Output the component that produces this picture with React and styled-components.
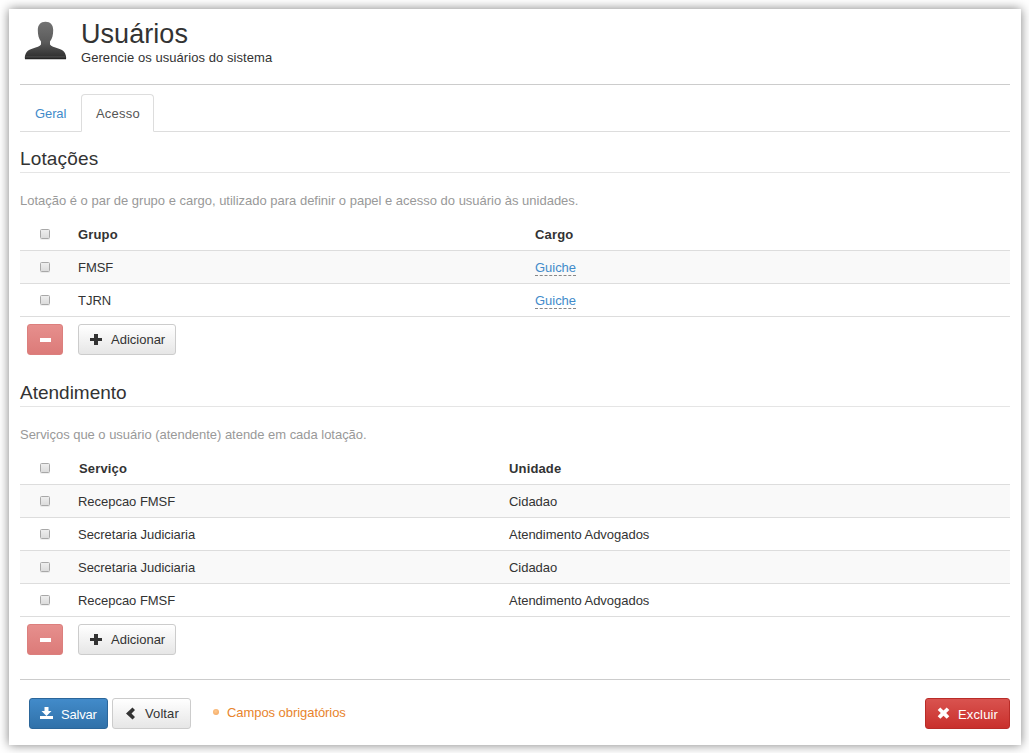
import React from 'react';
import styled, { createGlobalStyle, css } from 'styled-components';

const GlobalStyle = createGlobalStyle`
  * { box-sizing: border-box; }
  body {
    margin: 0;
    background: #fff;
    color: #333;
    font: 13px/18px "Liberation Sans", Arial, sans-serif;
  }
`;

const Page = styled.div`
  width: 1029px;
  height: 753px;
  padding: 9px 8px 8px 9px;
  overflow: hidden;
`;

const Panel = styled.main`
  width: 1012px;
  height: 736px;
  padding: 0 11px;
  background: #fff;
  box-shadow: 0 0 10px rgba(0, 0, 0, 0.5);
  display: flex;
  flex-direction: column;
`;

const Header = styled.header`
  display: flex;
  height: 76px;
  border-bottom: 1px solid #ccc;
`;

const Avatar = styled.svg`
  width: 44px;
  height: 40px;
  margin: 12px 0 0 4px;
`;

const Heading = styled.div`
  margin: 10px 0 0 13px;
`;

const Title = styled.h1`
  margin: 0;
  font-size: 27px;
  font-weight: 400;
  line-height: 30px;
  letter-spacing: 0.05px;
`;

const Subtitle = styled.p`
  margin: 0;
  letter-spacing: 0.06px;
`;

const Tabs = styled.nav`
  display: flex;
  height: 47px;
  margin-bottom: 16px;
  padding-top: 9px;
  border-bottom: 1px solid #ddd;
`;

const Tab = styled.a`
  height: 38px;
  padding: 10px 14px;
  width: ${(p) => p.$width}px;
  color: #428bca;
  letter-spacing: -0.1px;
  border: 1px solid transparent;
  ${(p) => p.$active && css`
    color: #555;
    letter-spacing: 0.2px;
    background: #fff;
    border-color: #ddd #ddd #fff;
    border-radius: 4px 4px 0 0;
  `}
`;

const SectionTitle = styled.h2`
  margin: 0;
  height: 25px;
  font-size: 19px;
  font-weight: 400;
  line-height: 22px;
  letter-spacing: ${(p) => p.$spacing || 0}px;
  border-bottom: 1px solid #e5e5e5;
`;

const Hint = styled.p`
  margin: 19px 0 8px;
  color: #999;
  letter-spacing: ${(p) => p.$spacing || 0}px;
`;

const Table = styled.div`
  display: flex;
  flex-direction: column;
`;

const Row = styled.div`
  display: grid;
  grid-template-columns: 58px ${(p) => p.$split}px 1fr;
  height: 33px;
  padding-top: 8px;
  letter-spacing: -0.03px;
  border-bottom: 1px solid #ddd;
  background: ${(p) => (p.$striped ? '#f9f9f9' : '#fff')};
  ${(p) => p.$head && css`
    font-weight: 700;
    letter-spacing: 0.15px;
  `}
`;

const HeadCell = styled.span`
  padding-left: ${(p) => p.$inset || 0}px;
`;

const CheckCell = styled.span`
  display: flex;
  padding: 3px 0 0 20px;
`;

const Check = styled.input`
  appearance: none;
  width: 10px;
  height: 10px;
  margin: 0;
  border: 1px solid #a8a8a8;
  border-radius: 1.5px;
  background: linear-gradient(#eee, #dcdcdc);
  box-shadow: 0 1px 0 rgba(0, 0, 0, 0.06);
`;

const Editable = styled.a`
  display: inline-block;
  height: 17px;
  color: #428bca;
  border-bottom: 1px dashed #888;
`;

const Actions = styled.div`
  display: flex;
  gap: 15px;
  height: ${(p) => p.$height}px;
  padding: 7px 0 0 7px;
`;

const tones = {
  plain: css`
    color: #333;
    border-color: #ccc;
    background: linear-gradient(#fff, #e6e6e6);
  `,
  primary: css`
    color: #fff;
    border-color: #2b669a;
    background: linear-gradient(#428bca, #3071a9);
  `,
  danger: css`
    color: #fff;
    border-color: #b92c28;
    background: linear-gradient(#d9534f, #c9302c);
  `,
  muted: css`
    color: #fff;
    border-color: #dc7f7d;
    background: linear-gradient(#e68f8d, #dc7b79);
  `,
};

const Button = styled.button`
  display: flex;
  align-items: center;
  width: ${(p) => p.$width}px;
  height: 31px;
  padding: 0 0 0 ${(p) => p.$inset ?? 11}px;
  font: inherit;
  border: 1px solid;
  border-radius: 3px;
  ${(p) => tones[p.$tone]}
`;

const Glyph = styled.svg`
  flex: none;
  width: 13px;
  height: 13px;
  margin-right: ${(p) => p.$gap ?? 8}px;
  fill: currentColor;
`;

const Label = styled.span`
  padding-top: ${(p) => p.$drop || 0}px;
  letter-spacing: ${(p) => p.$spacing || 0}px;
`;

const Footer = styled.footer`
  display: flex;
  gap: 4px;
  padding: 18px 0 0 9px;
  border-top: 1px solid #ccc;
`;

const Required = styled.span`
  display: flex;
  flex: 1;
  gap: 8px;
  padding: 6px 0 0 18px;
  color: #e8842c;
  letter-spacing: -0.06px;
`;

const Dot = styled.i`
  width: 6px;
  height: 6px;
  margin: 5px 0 0;
  border-radius: 50%;
  background: radial-gradient(circle at 45% 40%, #ffc98f, #f0a25a);
`;

const icons = {
  plus: 'M4 1h4v4h4v3H8v4H4V8H0V5h4z',
  minus: 'M1 5h11v4H1z',
  save: 'M4.500 0h4v4h3L6.500 9l-5-5h3zM0 9h13v3H0z',
  left: 'M7.500.5L10 3 6.500 6.500 10 10 7.500 12.500 1 6.500z',
  remove: 'M3.300.5L6.500 3.600 9.700.5 12.300 3 9.200 6 12.300 9.200 9.700 11.800 6.500 8.700 3.300 11.800.7 9.200 3.800 6 .7 3z',
};

const Icon = ({ name, gap }) => (
  <Glyph viewBox="0 0 13 13" $gap={gap}>
    <path d={icons[name]} />
  </Glyph>
);

const assignments = [
  ['FMSF', 'Guiche'],
  ['TJRN', 'Guiche'],
];

const services = [
  ['Recepcao FMSF', 'Cidadao'],
  ['Secretaria Judiciaria', 'Atendimento Advogados'],
  ['Secretaria Judiciaria', 'Cidadao'],
  ['Recepcao FMSF', 'Atendimento Advogados'],
];

const Listing = ({ columns, rows, split, editable, inset }) => (
  <Table>
    <Row $split={split} $head>
      <CheckCell><Check type="checkbox" /></CheckCell>
      {columns.map((c, i) => <HeadCell key={c} $inset={i === 0 ? inset : 0}>{c}</HeadCell>)}
    </Row>
    {rows.map(([first, second], i) => (
      <Row key={i} $split={split} $striped={i % 2 === 0}>
        <CheckCell><Check type="checkbox" /></CheckCell>
        <span>{first}</span>
        <span>{editable ? <Editable>{second}</Editable> : second}</span>
      </Row>
    ))}
  </Table>
);

const ListActions = ({ height }) => (
  <Actions $height={height}>
    <Button $tone="muted" $width={36} disabled><Icon name="minus" gap={0} /></Button>
    <Button $tone="plain" $width={98}><Icon name="plus" /><Label>Adicionar</Label></Button>
  </Actions>
);

export default function App() {
  return (
    <Page>
      <GlobalStyle />
      <Panel>
        <Header>
          <Avatar viewBox="0 0 44 40">
            <defs>
              <linearGradient id="skin" x1="0" y1="0" x2="0" y2="1">
                <stop offset="0" stopColor="#737373" />
                <stop offset="0.55" stopColor="#5b5b5b" />
                <stop offset="1" stopColor="#2c2c2c" />
              </linearGradient>
            </defs>
            <path
              d="M21.500 .8C26.500 .8 29.200 4 29.200 9c0 5-1 9-3.200 11.500v3c1.200 2 4.200 2.800 8.200 3.900C40.200 29 42.200 32.500 42.200 37.500H.8C.8 32.500 2.800 29 8.800 27.400c4-1.100 7-1.900 8.200-3.900v-3C14.800 18 13.800 14 13.800 9c0-5 2.700-8.200 7.700-8.200z"
              fill="url(#skin)"
            />
            <path d="M1.500 36h40" stroke="#555" strokeWidth="1" />
            <path d="M1 37.500h41" stroke="#252525" strokeWidth="1.500" />
          </Avatar>
          <Heading>
            <Title>Usuários</Title>
            <Subtitle>Gerencie os usuários do sistema</Subtitle>
          </Heading>
        </Header>
        <Tabs>
          <Tab $width={61}>Geral</Tab>
          <Tab $width={73} $active>Acesso</Tab>
        </Tabs>
        <SectionTitle $spacing={0.15}>Lotações</SectionTitle>
        <Hint $spacing={-0.01}>Lotação é o par de grupo e cargo, utilizado para definir o papel e acesso do usuário às unidades.</Hint>
        <Listing columns={['Grupo', 'Cargo']} rows={assignments} split={457} editable />
        <ListActions height={65} />
        <SectionTitle>Atendimento</SectionTitle>
        <Hint $spacing={-0.03}>Serviços que o usuário (atendente) atende em cada lotação.</Hint>
        <Listing columns={['Serviço', 'Unidade']} rows={services} split={431} inset={1} />
        <ListActions height={62} />
        <Footer>
          <Button $tone="primary" $width={79} $inset={10}><Icon name="save" /><Label $drop={2} $spacing={-0.2}>Salvar</Label></Button>
          <Button $tone="plain" $width={79} $inset={12}><Icon name="left" gap={7} /><Label $spacing={0.1}>Voltar</Label></Button>
          <Required><Dot />Campos obrigatórios</Required>
          <Button $tone="danger" $width={85}><Icon name="remove" /><Label $drop={2} $spacing={0.15}>Excluir</Label></Button>
        </Footer>
      </Panel>
    </Page>
  );
}
